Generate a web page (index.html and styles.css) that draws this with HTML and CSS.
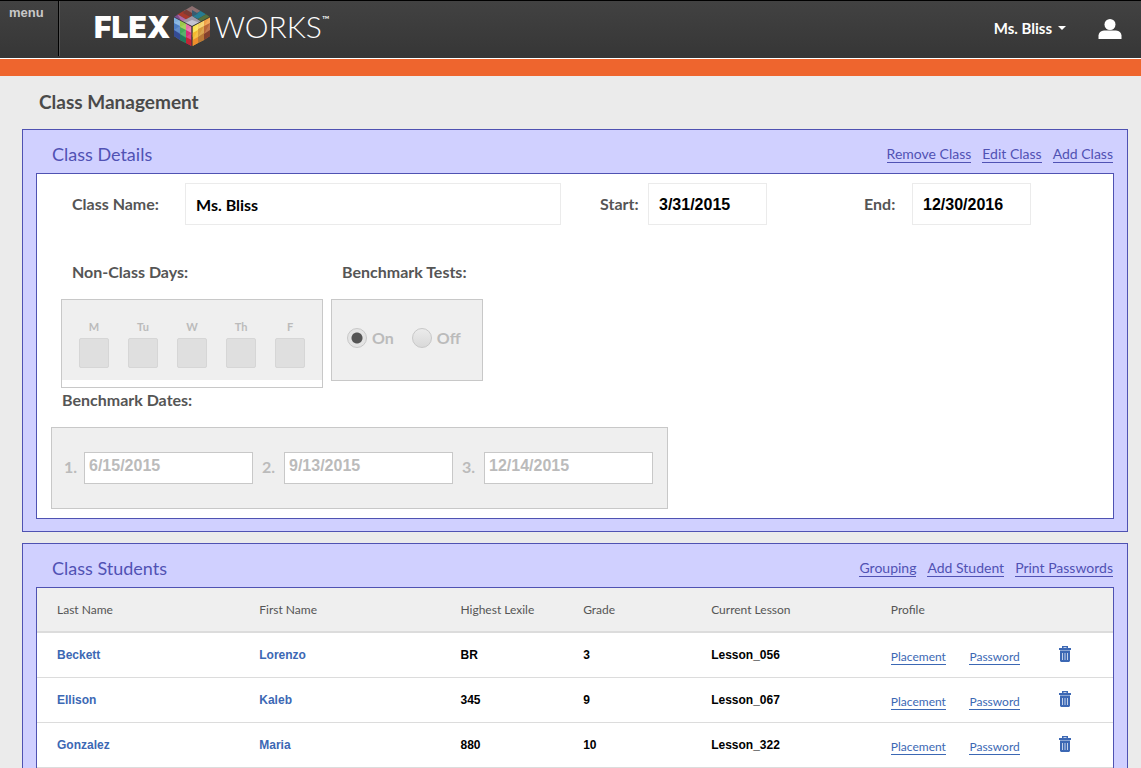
FILE: index.html
```html
<!DOCTYPE html>
<html lang="en">
<head>
<meta charset="utf-8">
<meta name="viewport" content="width=device-width, initial-scale=1">
<title>Class Management</title>
<link rel="stylesheet" href="styles.css">
</head>
<body>
<header class="topbar">
  <button class="menu-button" type="button">menu</button>
  <a class="logo" href="#" aria-label="Flex Works">
    <span class="logo-flex">FLEX</span>
    <svg class="logo-cube" viewBox="0 0 36 40" aria-hidden="true">
      <path fill="#8d6f70" d="M18 0 26.500 5 18 10 9.500 5z"/>
      <path fill="#a83a2c" d="M9.500 5 18 10 12 13.500 3.500 8.500z"/>
      <path fill="#7d3c34" d="M12 3.500 18 7 18 12 9 7z"/>
      <path fill="#267c92" d="M18 10 26.500 5 32 8.300 24 13z"/>
      <path fill="#385b70" d="M18 4 24 7.500 18 11z"/>
      <path fill="#57713c" d="M24 13 32 8.300 36 11 27 15.500z"/>
      <path fill="#7d4b8c" d="M0 11 4 8.500 12 13.500 8 16z"/>
      <path fill="#b26aa5" d="M3.500 8.500 14 14.500 8 16z"/>
      <path fill="#9d9aa8" d="M18 10 27 15.500 18 20 8 15.500z"/>
      <path fill="#c4c3d2" d="M18 14 25 16.500 18 20 11 17z"/>
      <path fill="#7fb0df" d="M0 11 6 14.300V20L0 24z"/>
      <path fill="#4d7dc2" d="M0 17 6 20V34L0 30z"/>
      <path fill="#354b94" d="M0 24 6 28V34L0 30z"/>
      <path fill="#9bc94a" d="M6 14.300 12 17.500V25L6 28z"/>
      <path fill="#43a85a" d="M6 21 12 24V37L6 34z"/>
      <path fill="#22795e" d="M6 28 12 32V37L6 34z"/>
      <path fill="#e76fa7" d="M12 17.500 17.500 20.500V29L12 27z"/>
      <path fill="#d52e77" d="M12 24 17.500 27V40L12 37z"/>
      <path fill="#c32534" d="M12 31 17.500 34V40L12 37z"/>
      <path fill="#fbe453" d="M18.500 20.500 24 17.500V28L18.500 31z"/>
      <path fill="#f5b92e" d="M18.500 27 24 24V37L18.500 40z"/>
      <path fill="#ef8e2c" d="M18.500 34 24 31V37L18.500 40z"/>
      <path fill="#f4cf66" d="M24 17.500 30 14.300V22L24 26z"/>
      <path fill="#d69a3b" d="M24 23 30 20V34L24 37z"/>
      <path fill="#b97836" d="M24 31 30 27V34L24 37z"/>
      <path fill="#f0a045" d="M30 14.300 36 11V18L30 22z"/>
      <path fill="#b96637" d="M30 20 36 17V30L30 34z"/>
      <path fill="#83402d" d="M30 28 36 24V30L30 34z"/>
      <path fill="#ffffff" fill-opacity=".12" d="M0 17 6 14.300V20zM0 24 6 20V27zM6 21 12 17.500V24zM6 28 12 24V31zM12 24 17.500 20.500V27zM12 31 17.500 27V34zM24 17.500V24L18.500 27zM24 24V31L18.500 34zM30 14.300V20L24 23zM30 20V27L24 31zM36 11V17L30 20zM36 17V24L30 28z"/>
      <path fill="none" stroke="#2b2b2b" stroke-opacity=".7" stroke-width="1" d="M0 11 18 20.500 36 11M18 20.500V40"/>
    </svg>
    <span class="logo-works">WORKS</span><span class="logo-tm">™</span>
  </a>
  <button class="account-button" type="button">Ms. Bliss<span class="caret"></span></button>
  <button class="avatar-button" type="button" aria-label="Profile">
    <svg class="avatar" viewBox="0 0 24 20" aria-hidden="true"><circle cx="12" cy="5.500" r="5.500"/><path d="M.5 20V16.500Q1 12 6 11.500H18Q23 12 23.500 16.500V20z"/></svg>
  </button>
</header>
<div class="accent-bar"></div>

<main class="page">
  <h1 class="page-title">Class Management</h1>

  <section class="panel">
    <div class="panel-head">
      <h2 class="panel-title">Class Details</h2>
      <nav class="panel-links"><a href="#">Remove Class</a><a href="#">Edit Class</a><a href="#">Add Class</a></nav>
    </div>
    <form class="panel-body details">
      <div class="main-fields">
        <label for="class-name">Class Name:</label><input class="field field-name" id="class-name" type="text" value="Ms. Bliss">
        <label class="label-start" for="start">Start:</label><input class="field" id="start" type="text" value="3/31/2015">
        <label class="label-end" for="end">End:</label><input class="field" id="end" type="text" value="12/30/2016">
      </div>
      <div class="options">
        <div class="option" role="group" aria-labelledby="days-label">
          <div class="group-label" id="days-label">Non-Class Days:</div>
          <div class="days-frame">
            <div class="days">
              <label class="day">M<input type="checkbox" disabled></label>
              <label class="day">Tu<input type="checkbox" disabled></label>
              <label class="day">W<input type="checkbox" disabled></label>
              <label class="day">Th<input type="checkbox" disabled></label>
              <label class="day">F<input type="checkbox" disabled></label>
            </div>
          </div>
        </div>
        <div class="option" role="group" aria-labelledby="tests-label">
          <div class="group-label" id="tests-label">Benchmark Tests:</div>
          <div class="tests">
            <label class="choice"><input type="radio" name="tests" checked disabled>On</label>
            <label class="choice"><input type="radio" name="tests" disabled>Off</label>
          </div>
        </div>
      </div>
      <div class="group-label dates-label">Benchmark Dates:</div>
      <div class="dates">
        <label class="date" for="date-1">1.</label><input class="date-field" id="date-1" type="text" value="6/15/2015" disabled>
        <label class="date" for="date-2">2.</label><input class="date-field" id="date-2" type="text" value="9/13/2015" disabled>
        <label class="date" for="date-3">3.</label><input class="date-field" id="date-3" type="text" value="12/14/2015" disabled>
      </div>
    </form>
  </section>

  <section class="panel panel-open">
    <div class="panel-head">
      <h2 class="panel-title">Class Students</h2>
      <nav class="panel-links"><a href="#">Grouping</a><a href="#">Add Student</a><a href="#">Print Passwords</a></nav>
    </div>
    <div class="panel-body body-open">
      <table class="students">
        <colgroup><col class="c-last"><col class="c-first"><col class="c-lexile"><col class="c-grade"><col class="c-lesson"><col class="c-place"><col class="c-pass"><col></colgroup>
        <thead><tr><th>Last Name</th><th>First Name</th><th>Highest Lexile</th><th>Grade</th><th>Current Lesson</th><th colspan="3">Profile</th></tr></thead>
        <tbody>
          <tr><td><a href="#">Beckett</a></td><td><a href="#">Lorenzo</a></td><td>BR</td><td>3</td><td>Lesson_056</td><td class="action"><a href="#">Placement</a></td><td class="action"><a href="#">Password</a></td><td><button class="trash" type="button" aria-label="Delete Beckett"><svg viewBox="0 0 12 16" aria-hidden="true"><use href="#trash"/></svg></button></td></tr>
          <tr><td><a href="#">Ellison</a></td><td><a href="#">Kaleb</a></td><td>345</td><td>9</td><td>Lesson_067</td><td class="action"><a href="#">Placement</a></td><td class="action"><a href="#">Password</a></td><td><button class="trash" type="button" aria-label="Delete Ellison"><svg viewBox="0 0 12 16" aria-hidden="true"><use href="#trash"/></svg></button></td></tr>
          <tr><td><a href="#">Gonzalez</a></td><td><a href="#">Maria</a></td><td>880</td><td>10</td><td>Lesson_322</td><td class="action"><a href="#">Placement</a></td><td class="action"><a href="#">Password</a></td><td><button class="trash" type="button" aria-label="Delete Gonzalez"><svg viewBox="0 0 12 16" aria-hidden="true"><use href="#trash"/></svg></button></td></tr>
        </tbody>
      </table>
    </div>
  </section>
</main>
<svg class="symbols" aria-hidden="true"><symbol id="trash" viewBox="0 0 12 16"><path fill="#3c68b4" d="M3 0H9V2H12V4H0V2H3zM1 5H11V15L10 16H2L1 15z"/><path fill="#c3d1e9" d="M4.500 1H7.500V2H4.500zM3 7H4V14H3zM5.500 7H6.500V14H5.500zM8 7H9V14H8z"/><path fill="#8ea8d4" d="M1 4H11V5H1z"/></symbol></svg>
</body>
</html>
```
FILE: styles.css
```css
* { box-sizing: border-box; }
body { margin: 0; background: #ebebeb; color: #4a4a4a; font-family: Lato, "Liberation Sans", sans-serif; }
button, input { font: inherit; }
button { background: none; border: 0; padding: 0; cursor: pointer; }
h1, h2 { margin: 0; }
.symbols { display: none; }

.topbar { display: flex; height: 58px; border-top: 1px solid #000; background: linear-gradient(#424242, #363636); color: #fff; }
.menu-button { width: 59px; height: 55px; padding: 4px 0 0 9px; display: flex; align-items: flex-start; border-right: 1px solid #000; box-shadow: 1px 0 #565656; color: #c8c8c8; font: bold 13px/16px "Liberation Sans", Arial, sans-serif; }
.logo { display: flex; align-items: flex-start; margin-left: 35px; padding-top: 5px; color: #fff; text-decoration: none; }
.logo-flex { font: 900 30px/42px Inter, sans-serif; }
.logo-works { font-size: 30px; line-height: 41px; font-weight: 300; }
.logo-cube { width: 36px; height: 40px; margin: 0 4px; }
.logo-tm { padding-top: 6px; font-size: 10px; line-height: 14px; }
.account-button { display: flex; align-items: center; gap: 6px; margin-left: auto; height: 54px; color: #fff; font-size: 15px; font-weight: bold; }
.caret { border: 4px solid transparent; border-top-color: #fff; border-bottom: 0; }
.avatar-button { display: flex; align-items: center; height: 56px; margin: 0 19px 0 32px; }
.avatar { width: 24px; height: 20px; fill: #fff; }
.accent-bar { height: 18px; border-top: 1px solid #fff; background: #ee652e; }

.page { padding: 0 13px 0 22px; }
.page-title { padding: 14px 17px 15px; font-size: 19px; line-height: 24px; }
.panel { margin-bottom: 11px; padding: 0 13px 12px; border: 1px solid #4f52b2; background: #d0d0ff; }
.panel-head { display: flex; justify-content: space-between; align-items: center; height: 43px; padding: 6px 1px 0 16px; color: #5052b4; }
.panel-title { padding-bottom: 2px; font-size: 18px; line-height: 24px; font-weight: normal; }
.panel-links { display: flex; gap: 11px; font-size: 14px; line-height: 16px; }
.panel-links a { color: #5052b4; text-decoration: none; border-bottom: 1px solid; }
.panel-body { border: 1px solid #4f52b2; background: #fff; }
.panel-open { margin-bottom: 0; padding-bottom: 0; border-bottom: 0; }
.body-open { border-bottom: 0; }

.details { padding: 9px 14px; font-size: 16px; line-height: 20px; font-weight: bold; color: #555; }
.main-fields { display: grid; grid-template-columns: 113px minmax(0, 1fr) 87px 119px 145px 119px; align-items: center; padding: 0 68px 0 21px; }
.label-start { padding-left: 39px; }
.label-end { padding-left: 97px; }
.field { width: 100%; height: 42px; padding: 2px 10px 0; border: 1px solid #ebebeb; background: #fff; color: #000; font: bold 16px/20px "Liberation Sans", Arial, sans-serif; }
.field-name { padding-top: 0; font-family: Lato, sans-serif; }
.options { display: flex; gap: 8px; margin-top: 37px; padding-left: 10px; }
.group-label { padding: 0 11px 17px; }
.days-frame { width: 262px; padding-bottom: 7px; border: 1px solid #c8c8c8; }
.days { display: flex; justify-content: space-between; height: 80px; padding: 20px 17px 0; background: #efefef; }
.day { display: flex; flex-direction: column; align-items: center; gap: 5px; color: #bbb; font-size: 11px; line-height: 13px; }
.day input { appearance: none; width: 30px; height: 30px; margin: 0; border: 1px solid #d6d6d6; border-radius: 2px; background: #dfdfdf; }
.tests { display: flex; align-items: center; gap: 18px; width: 152px; height: 82px; padding: 0 15px 4px; border: 1px solid #c8c8c8; background: #efefef; color: #bbb; }
.choice { display: flex; align-items: center; gap: 5px; }
.choice input { appearance: none; width: 20px; height: 20px; margin: 0; border: 1px solid #c8c8c8; border-radius: 50%; background: linear-gradient(#ebebeb, #d9d9d9); }
.choice input:checked { background: radial-gradient(circle, #555 5px, #e4e4e4 6px); }
.dates-label { padding-top: 2px; }
.dates { display: grid; grid-template-columns: 20px 169px 31px 169px 31px 169px; align-items: center; width: 617px; height: 82px; padding: 0 12px; border: 1px solid #c8c8c8; background: #efefef; color: #bbb; }
.date { padding: 0 0 3px 9px; }
.date:first-child { padding-left: 0; }
.date-field { width: 100%; height: 32px; padding: 0 4px 4px; border: 1px solid #c8c8c8; background: #fff; color: #bbb; font: bold 16px/20px "Liberation Sans", Arial, sans-serif; }

.students { width: 100%; table-layout: fixed; border-collapse: separate; border-spacing: 0; font: bold 12px/16px "Liberation Sans", Arial, sans-serif; color: #000; }
.c-last { width: 18.8%; }
.c-first { width: 18.7%; }
.c-lexile { width: 11.4%; }
.c-grade { width: 11.9%; }
.c-lesson { width: 16.7%; }
.c-place { width: 7.3%; }
.c-pass { width: 8.3%; }
.students th { height: 45px; padding: 0 0 0 20px; border-bottom: 2px solid #dcdcdc; background: #efefef; color: #555; font: 12px/16px Lato, sans-serif; text-align: left; }
.students td { height: 45px; padding: 0 0 0 20px; border-bottom: 1px solid #dcdcdc; white-space: nowrap; }
.students a { color: #3c68b4; text-decoration: none; }
.students .action { padding-top: 3px; font: 12px/14px Lato, sans-serif; }
.action a { border-bottom: 1px solid; }
.trash { display: block; width: 12px; height: 16px; margin-bottom: 2px; }
.trash svg { display: block; width: 12px; height: 16px; }
```
